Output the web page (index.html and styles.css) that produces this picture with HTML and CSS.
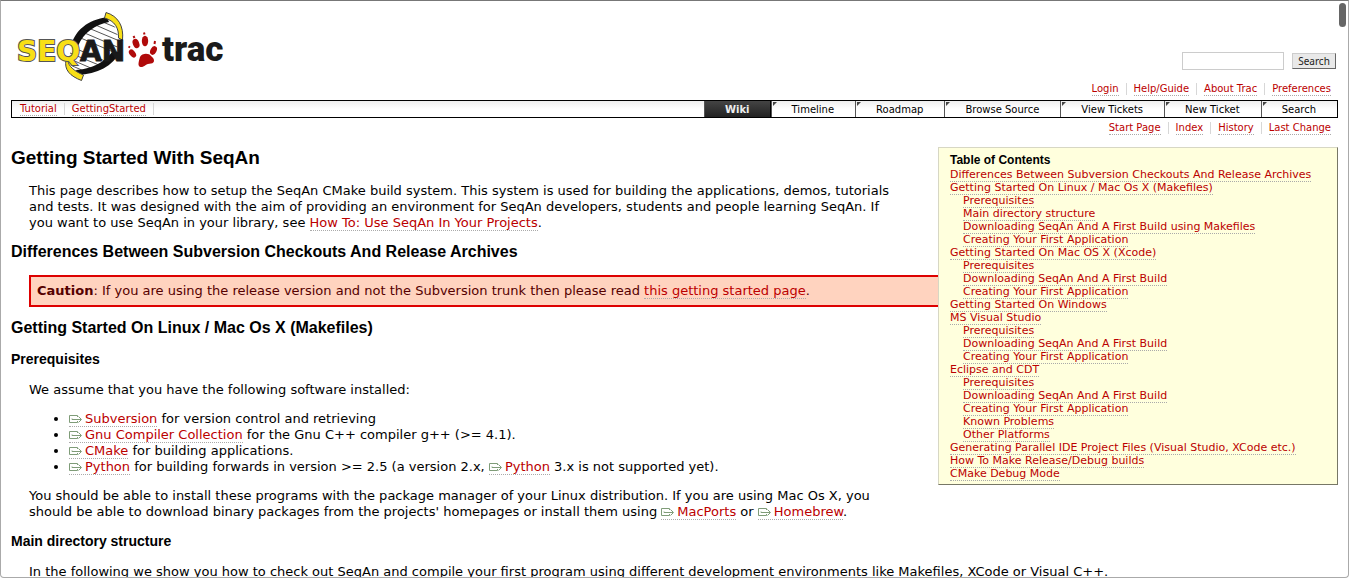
FILE: index.html
```html
<!DOCTYPE html>
<html lang="en">
<head>
<meta charset="utf-8">
<title>GettingStarted – SeqAn</title>
<link rel="stylesheet" href="styles.css">
</head>
<body>
<svg class="sprite" aria-hidden="true">
  <symbol id="ext" viewBox="0 0 13 8">
    <path d="M8.500 2V0.500H0.500V7.500H8.500V6M3 3.500V4.500H12M9.500 1.500L12.500 4.500L9.500 7.500" fill="none" stroke="#7f9c78"/>
  </symbol>
</svg>
<header class="banner">
  <a class="logo" href="#" aria-label="SeqAn trac">
    <svg width="216" height="72" viewBox="14 10 216 72">
      <defs>
        <clipPath id="helix"><path d="M70 48C74 32 88 22 107 18C124 30 122 58 98 69L78 74C70 66 67 58 70 48Z"/></clipPath>
      </defs>
      <path d="M70 48C74 32 88 22 107 18C124 30 122 58 98 69L78 74C70 66 67 58 70 48Z" fill="#fff"/>
      <g clip-path="url(#helix)" stroke="#555" stroke-width="1">
        <path d="M98 20l24 10M91 23l32 14M86 27l36 15M80 31l42 18M76 36l42 18M72 47l40 17M70 53l36 15M70 59l30 13M70 65l26 11"/>
      </g>
      <path d="M71 46C75 30 88 20 107 17L109 22C95 25 84 32 78 46Z" fill="#111"/>
      <path d="M78 75C97 74 113 66 120 52L112 52C104 63 91 69 76 70Z" fill="#111"/>
      <path d="M106 12.500C118 16 124 26 122.500 40L118.500 38C119 28 115 21 104.500 18Z" fill="#f8df16" stroke="#444"/>
      <path d="M68 60C68 66 74 71 83.500 75L81.500 80.500C70 76 64 70 66 60Z" fill="#f8df16" stroke="#444"/>
      <text x="17" y="61"><tspan class="logo-seq">SEQ</tspan><tspan class="logo-an">AN</tspan></text>
      <g fill="#b00a0a">
        <ellipse cx="136" cy="43.500" rx="3.200" ry="4.800" transform="rotate(-20 136 43.500)"/>
        <ellipse cx="145" cy="41" rx="3.200" ry="5.200"/>
        <ellipse cx="153.500" cy="50.500" rx="3" ry="4.600" transform="rotate(28 153.500 50.500)"/>
        <ellipse cx="132.500" cy="53.500" rx="2.800" ry="4.600" transform="rotate(-38 132.500 53.500)"/>
        <path d="M133.500 36l1 2M144 32.500l.5 2M155 41l-.5 3M128.500 46.500l1.500 1" stroke="#b00a0a" stroke-width="2"/>
        <path d="M140 57C142 53 149 53 151 56C155 59 155 63 151 63.500C146 63.500 144 67.500 140.500 67C137 66 139 61 140 57Z"/>
      </g>
      <text class="logo-trac" x="162" y="61">trac</text>
    </svg>
  </a>
  <form class="search">
    <input type="text" aria-label="Search terms">
    <button type="button">Search</button>
  </form>
  <nav class="links metanav">
    <a href="#">Login</a><a href="#">Help/Guide</a><a href="#">About Trac</a><a href="#">Preferences</a>
  </nav>
</header>
<div class="mainnav">
  <nav class="links path"><a href="#">Tutorial</a><a href="#">GettingStarted</a></nav>
  <nav class="tabs">
    <a class="active" href="#">Wiki</a><a href="#">Timeline</a><a href="#">Roadmap</a><a href="#">Browse Source</a><a href="#">View Tickets</a><a href="#">New Ticket</a><a href="#">Search</a>
  </nav>
</div>
<nav class="links ctxnav">
  <a href="#">Start Page</a><a href="#">Index</a><a href="#">History</a><a href="#">Last Change</a>
</nav>
<main>
  <nav class="toc">
    <h4>Table of Contents</h4>
    <ul>
      <li><a href="#">Differences Between Subversion Checkouts And Release Archives</a></li>
      <li><a href="#">Getting Started On Linux / Mac Os X (Makefiles)</a>
        <ul>
          <li><a href="#">Prerequisites</a></li>
          <li><a href="#">Main directory structure</a></li>
          <li><a href="#">Downloading SeqAn And A First Build using Makefiles</a></li>
          <li><a href="#">Creating Your First Application</a></li>
        </ul></li>
      <li><a href="#">Getting Started On Mac OS X (Xcode)</a>
        <ul>
          <li><a href="#">Prerequisites</a></li>
          <li><a href="#">Downloading SeqAn And A First Build</a></li>
          <li><a href="#">Creating Your First Application</a></li>
        </ul></li>
      <li><a href="#">Getting Started On Windows</a></li>
      <li><a href="#">MS Visual Studio</a>
        <ul>
          <li><a href="#">Prerequisites</a></li>
          <li><a href="#">Downloading SeqAn And A First Build</a></li>
          <li><a href="#">Creating Your First Application</a></li>
        </ul></li>
      <li><a href="#">Eclipse and CDT</a>
        <ul>
          <li><a href="#">Prerequisites</a></li>
          <li><a href="#">Downloading SeqAn And A First Build</a></li>
          <li><a href="#">Creating Your First Application</a></li>
          <li><a href="#">Known Problems</a></li>
          <li><a href="#">Other Platforms</a></li>
        </ul></li>
      <li><a href="#">Generating Parallel IDE Project Files (Visual Studio, XCode etc.)</a></li>
      <li><a href="#">How To Make Release/Debug builds</a></li>
      <li><a href="#">CMake Debug Mode</a></li>
    </ul>
  </nav>
  <h1>Getting Started With SeqAn</h1>
  <p>This page describes how to setup the SeqAn CMake build system. This system is used for building the applications, demos, tutorials<br>and tests. It was designed with the aim of providing an environment for SeqAn developers, students and people learning SeqAn. If<br>you want to use SeqAn in your library, see <a href="#">How To: Use SeqAn In Your Projects</a>.</p>
  <h2>Differences Between Subversion Checkouts And Release Archives</h2>
  <div class="caution"><strong>Caution</strong>: If you are using the release version and not the Subversion trunk then please read <a href="#">this getting started page</a>.</div>
  <h2>Getting Started On Linux / Mac Os X (Makefiles)</h2>
  <h3>Prerequisites</h3>
  <p>We assume that you have the following software installed:</p>
  <ul class="list">
    <li><a href="#"><svg class="ext"><use href="#ext"/></svg>Subversion</a> for version control and retrieving</li>
    <li><a href="#"><svg class="ext"><use href="#ext"/></svg>Gnu Compiler Collection</a> for the Gnu C++ compiler g++ (&gt;= 4.1).</li>
    <li><a href="#"><svg class="ext"><use href="#ext"/></svg>CMake</a> for building applications.</li>
    <li><a href="#"><svg class="ext"><use href="#ext"/></svg>Python</a> for building forwards in version &gt;= 2.5 (a version 2.x, <a href="#"><svg class="ext"><use href="#ext"/></svg>Python</a> 3.x is not supported yet).</li>
  </ul>
  <p>You should be able to install these programs with the package manager of your Linux distribution. If you are using Mac Os X, you<br>should be able to download binary packages from the projects' homepages or install them using <a href="#"><svg class="ext"><use href="#ext"/></svg>MacPorts</a> or <a href="#"><svg class="ext"><use href="#ext"/></svg>Homebrew</a>.</p>
  <h3>Main directory structure</h3>
  <p>In the following we show you how to check out SeqAn and compile your first program using different development environments like Makefiles, XCode or Visual C++.</p>
</main>
<div class="scrollbar"></div>
<div class="frame"></div>
</body>
</html>
```
FILE: styles.css
```css
* { box-sizing: border-box; }
html { height: 100%; overflow: hidden; }
body {
  height: 100%;
  overflow: hidden;
  margin: 0;
  padding: 10px 11px 0;
  background: #fff;
  color: #000;
  font: 13px/16px Verdana, "DejaVu Sans", sans-serif;
}
a { color: #b00; text-decoration: none; border-bottom: 1px dotted #aaa; }
.sprite { display: none; }

.banner {
  display: grid;
  grid-template-columns: auto 1fr;
  grid-template-rows: 60px 30px;
}
.logo { grid-row: 1 / 3; border: 0; margin-left: 3px; }
.logo svg { display: block; }
.logo text { font: 700 28px "DejaVu Sans", sans-serif; }
.logo-seq { fill: #f8df16; stroke: #555; stroke-width: 2px; paint-order: stroke; }
.logo-an { fill: #1a1a1a; stroke: #1a1a1a; }
.logo .logo-trac { font: 900 35px Roboto, sans-serif; fill: #1a1a1a; }
.search {
  display: flex;
  justify-content: flex-end;
  align-items: center;
  gap: 8px;
  padding-top: 42px;
  margin-right: 2px;
}
.search input { width: 102px; height: 18px; border: 1px solid #ccc; padding: 0 3px; background: #fff; }
.search button {
  width: 44px;
  height: 16px;
  padding: 0;
  border: 1px solid;
  border-color: #ccc #666 #666 #ccc;
  background: #e9e9e9;
  color: #222;
  font: 10px/13px "Noto Sans", sans-serif;
}
.links { display: flex; font-size: 10px; line-height: 12px; }
.links a { position: relative; margin: 0 7px 0 8px; }
.links a:not(:last-child)::after, .path a:last-child::after {
  content: "";
  position: absolute;
  right: -8px;
  top: 0;
  height: 12px;
  border-right: 1px solid #d7d7d7;
}
.metanav { justify-content: flex-end; align-items: flex-start; padding-top: 13px; }
.mainnav {
  display: flex;
  justify-content: space-between;
  height: 18px;
  border: 1px solid #000;
  background: linear-gradient(#eee, #fff 8px);
}
.path { align-items: flex-start; padding-top: 2px; }
.tabs { display: flex; font-size: 10px; line-height: 17px; }
.tabs a {
  position: relative;
  padding: 0 21px 0 20px;
  border: 0;
  border-left: 1px solid #555;
  color: #000;
}
.tabs a:not(.active)::before {
  content: "";
  position: absolute;
  left: 1px;
  top: 1px;
  border: 2px solid;
  border-color: #444 transparent transparent #444;
}
.tabs .active {
  padding-right: 20px;
  border-right: 1px solid #000;
  background: linear-gradient(#444, #222);
  color: #eee;
  font-weight: 700;
}
.ctxnav { justify-content: flex-end; padding-top: 4px; }

h1, h2, h3, h4 { font-family: Arial, "Liberation Sans", sans-serif; font-weight: 700; }
h1 { margin: 0 0 14px; font-size: 19px; line-height: 22px; }
h2 { margin: 12px 0 15px; font-size: 16px; line-height: 16px; }
h3 { margin: 13px 0 15px; font-size: 14px; line-height: 16px; }
main { padding-top: 12px; }
p { margin: 13px 18px; }
.caution {
  margin: 13px 18px;
  padding: 6px;
  border: 2px solid #d00;
  background: #ffd3bf;
  color: #500;
}
.list { margin: 13px 0; padding-left: 58px; }
.ext { width: 13px; height: 8px; margin-right: 3px; }
.toc {
  position: relative;
  float: right;
  width: 400px;
  margin: 0 0 20px 20px;
  padding: 5px 11px 4px;
  border: 1px solid;
  border-color: #d7d7c4 #776 #776 #d7d7c4;
  background: #ffd;
  font-size: 11px;
  line-height: 13px;
}
.toc h4 { margin: 0 0 1px; font-size: 12px; line-height: 14px; }
.toc ul { margin: 0; padding: 0; list-style: none; }
.toc ul ul { padding-left: 13px; }
.scrollbar { position: fixed; right: 3px; top: 3px; width: 7px; height: 24px; border-radius: 4px; background: #666; }
.frame { position: fixed; inset: 0; border: 1px solid #aaa; border-top-color: #777; border-radius: 0 0 4px 4px; pointer-events: none; }
```
